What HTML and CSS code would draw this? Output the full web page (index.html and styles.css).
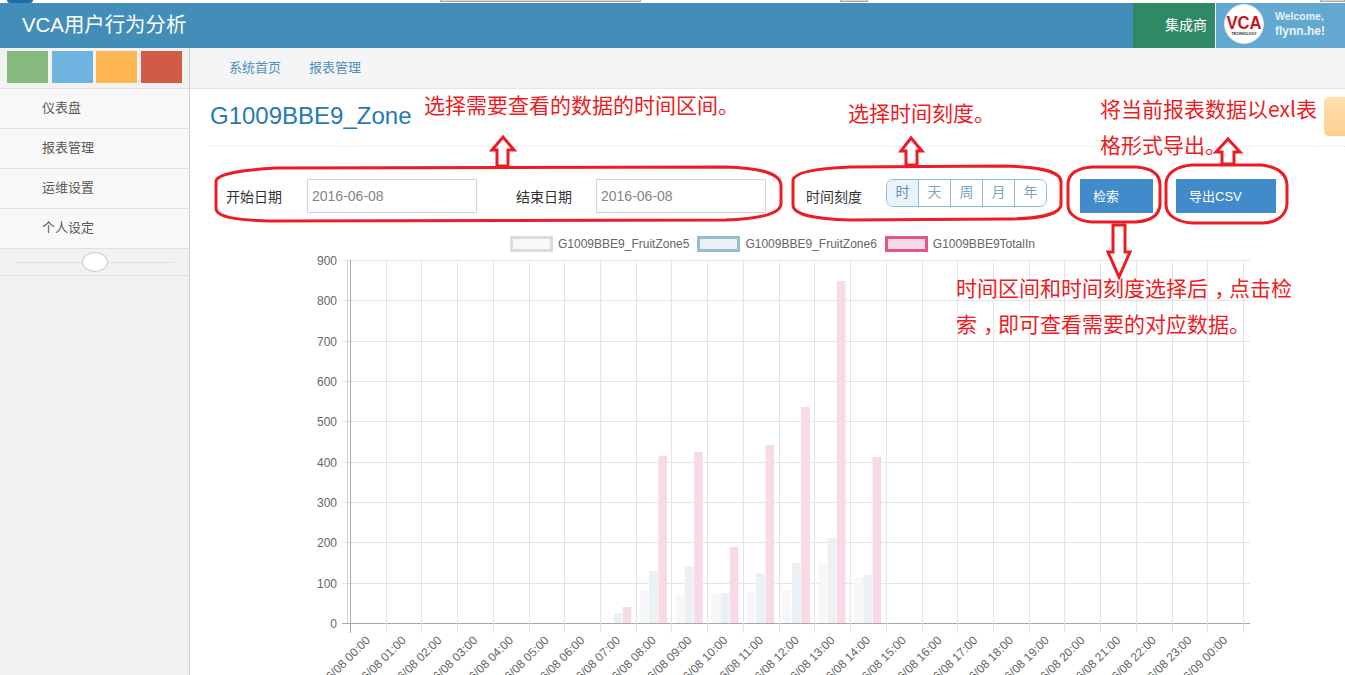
FILE: index.html
```html
<!DOCTYPE html>
<html lang="zh-CN">
<head>
    <meta charset="UTF-8">
    <title>VCA用户行为分析</title>
    <link rel="stylesheet" href="styles.css">
</head>
<body>
    <div class="topstrip">
        <span class="strip-logo"></span>
        <span class="strip-bar strip-bar-a"></span>
        <span class="strip-bar strip-bar-b"></span>
        <span class="strip-bar strip-bar-c"></span>
    </div>
    <header class="navbar">
        <div class="brand">VCA用户行为分析</div>
        <div class="role">集成商</div>
        <div class="user">
            <svg class="avatar" viewBox="0 0 40 40">
                <circle cx="20" cy="20" r="19.5" fill="#fff" stroke="#d9e6ef"/>
                <text x="20" y="25" text-anchor="middle" class="avatar-name" textLength="35" lengthAdjust="spacingAndGlyphs">VCA</text>
                <text x="20" y="31" text-anchor="middle" class="avatar-sub" textLength="25" lengthAdjust="spacingAndGlyphs">TECHNOLOGY</text>
            </svg>
            <div class="user-info">
                <span class="user-hello">Welcome,</span>
                <span class="user-name">flynn.he!</span>
            </div>
        </div>
    </header>
    <div class="main">
        <aside class="sidebar">
            <div class="shortcuts">
                <span class="shortcut s-green"></span>
                <span class="shortcut s-blue"></span>
                <span class="shortcut s-orange"></span>
                <span class="shortcut s-red"></span>
            </div>
            <div class="menu-item">仪表盘</div>
            <div class="menu-item">报表管理</div>
            <div class="menu-item">运维设置</div>
            <div class="menu-item">个人设定</div>
            <div class="collapse"><span class="collapse-knob"></span></div>
        </aside>
        <main class="content">
            <nav class="subnav">
                <a>系统首页</a>
                <a>报表管理</a>
            </nav>
            <div class="page-head"><h1>G1009BBE9_Zone</h1></div>
            <div class="toolbar">
                <label class="label-start">开始日期</label>
                <input class="date" type="text" placeholder="2016-06-08">
                <label class="label-end">结束日期</label>
                <input class="date" type="text" placeholder="2016-06-08">
                <label class="label-scale">时间刻度</label>
                <div class="scale">
                    <span class="active">时</span><span>天</span><span>周</span><span>月</span><span>年</span>
                </div>
                <button class="btn btn-search">检索</button>
                <button class="btn btn-export">导出CSV</button>
            </div>
            <div class="legend">
                <span class="swatch sw-grey"></span><span class="legend-text">G1009BBE9_FruitZone5</span>
                <span class="swatch sw-blue"></span><span class="legend-text">G1009BBE9_FruitZone6</span>
                <span class="swatch sw-pink"></span><span class="legend-text">G1009BBE9TotalIn</span>
            </div>
            <svg id="chart" class="chart" viewBox="300 255 1000 420"></svg>
        </main>
    </div>

    <div class="side-tab"></div>

    <!-- 标注 -->
    <svg class="marks" viewBox="0 0 1345 675">
        <path d="M216 181C218 173 245 170 275 168L725 167C760 168 781 173 781 186L781 204C780 215 755 219 725 220L270 221C240 220 216 218 216 208Z"/>
        <path d="M793 180C795 171 825 168 850 167L1005 166C1040 167 1061 171 1061 182L1061 205C1060 215 1035 219 1005 219L850 220C820 219 793 216 793 205Z"/>
        <path d="M1068 183C1069 172 1080 168 1092 167L1136 167C1150 168 1160 173 1160 185L1160 205C1159 216 1150 221 1136 222L1092 222C1078 221 1068 215 1068 205Z"/>
        <path d="M1166 183C1167 172 1178 166 1192 165L1262 165C1277 167 1287 173 1287 186L1287 204C1286 216 1276 223 1262 223L1192 223C1177 222 1166 215 1166 205Z"/>
        <path class="arrow" d="M497 166L497 150L492 150L503 137L514 150L508 150L508 166Z"/>
        <path class="arrow" d="M906 165L906 151L901 151L911 138L922 151L917 151L917 165Z"/>
        <path class="arrow" d="M1222 164L1222 152L1216 152L1228 139L1240 152L1234 152L1234 164Z"/>
        <path class="arrow" d="M1113 225L1125 225L1125 252L1130 252L1119 277L1108 252L1113 252Z"/>
    </svg>
    <p class="note note-range">选择需要查看的数据的时间区间。</p>
    <p class="note note-scale">选择时间刻度。</p>
    <p class="note note-export">将当前报表数据以exl表<br>格形式导出。</p>
    <p class="note note-search">时间区间和时间刻度选择后<span class="comma">，</span>点击检<br>索<span class="comma">，</span>即可查看需要的对应数据。</p>

    <script>
        const NS = 'http://www.w3.org/2000/svg';
        const chart = document.getElementById('chart');
        const left = 350, band = 35.72, zero = 623, top0 = 260;

        // 每小时三根柱子的顶部y，从页面上量出来的
        const rows = {
            7: [null, 613, 607],
            8: [591, 571, 456],
            9: [594, 566, 452],
            10: [594, 593, 547],
            11: [591, 573, 445],
            12: [591, 563, 407],
            13: [564, 538, 281],
            14: [578, 575, 457]
        };
        const colors = ['bar-grey', 'bar-blue', 'bar-pink'];

        function add(tag, attrs, text) {
            const el = document.createElementNS(NS, tag);
            for (const k in attrs) el.setAttribute(k, attrs[k]);
            if (text !== undefined) el.textContent = text;
            chart.appendChild(el);
            return el;
        }

        for (let i = 0; i <= 9; i++) {
            const y = Math.round(top0 + (zero - top0) * i / 9) + 0.5;
            add('line', { x1: 342, x2: 1250, y1: y, y2: y, class: i === 9 ? 'axis' : 'grid' });
            add('text', { x: 337, y: y + 4, class: 'ylabel' }, (900 - i * 100));
        }
        add('line', { x1: 347.5, x2: 347.5, y1: 260, y2: 623, class: 'grid-dark' });
        for (let i = 0; i <= 25; i++) {
            const x = Math.round(left + i * band) + 0.5;
            add('line', { x1: x, x2: x, y1: 260, y2: 633, class: i === 0 ? 'axis' : 'grid' });
        }
        for (const h in rows) {
            const x0 = left + h * band;
            rows[h].forEach(function (y, n) {
                if (y === null) return;
                add('rect', { x: x0 + 4 + n * 9.3, y: y, width: 8.6, height: 623 - y, class: colors[n] });
            });
        }
        for (let i = 0; i <= 24; i++) {
            const x = left + i * band + 21;
            const hour = String(i % 24).padStart(2, '0');
            const label = (i === 24 ? '06/09 ' : '06/08 ') + hour + ':00';
            add('text', { x: x, y: 641, class: 'xlabel', transform: 'rotate(-45 ' + x + ' 641)' }, label);
        }
    </script>
</body>
</html>
```

FILE: styles.css
```css
* {
    box-sizing: border-box;
}
html, body {
    margin: 0;
    height: 675px;
    overflow: hidden;
}
body {
    font-family: "Liberation Sans", "Noto Sans CJK SC", sans-serif;
    font-size: 13px;
    color: #393939;
    background-color: #fff;
    position: relative;
}

/* top sliver */
.topstrip {
    height: 3px;
    display: flex;
    overflow: hidden;
}
.strip-logo {
    width: 26px;
    height: 3px;
    margin-left: 7px;
    background-color: #1f6da8;
    border-radius: 0 0 8px 8px;
}
.strip-bar {
    height: 2px;
    background-color: #d6d6d6;
    border: 1px solid #a9a9a9;
    border-top: none;
}
.strip-bar-a {
    width: 201px;
    margin-left: 407px;
}
.strip-bar-b {
    width: 28px;
    margin-left: 199px;
}
.strip-bar-c {
    width: 25px;
    margin-left: 452px;
}

/* navbar */
.navbar {
    height: 45px;
    display: flex;
    background-color: #438eb9;
    color: #fff;
}
.brand {
    flex: 1;
    padding-left: 22px;
    font-size: 20.4px;
    line-height: 44px;
}
.role {
    width: 83px;
    padding-left: 32px;
    line-height: 44px;
    font-size: 14px;
    background-color: #2e8965;
    border-right: 1px solid #fff;
}
.user {
    width: 129px;
    display: flex;
    background-color: #62a8d1;
}
.avatar {
    width: 40px;
    height: 40px;
    margin: 1px 0 0 8px;
}
.avatar-name {
    font-family: "Liberation Sans", sans-serif;
    font-size: 18px;
    font-weight: bold;
    fill: #c8151d;
}
.avatar-sub {
    font-family: "Liberation Sans", sans-serif;
    font-size: 4px;
    font-weight: bold;
    fill: #222;
}
.user-info {
    display: flex;
    flex-direction: column;
    margin: 6px 0 0 11px;
    line-height: 15px;
    font-weight: bold;
    color: #e8f3fa;
}
.user-hello {
    font-size: 10.5px;
}
.user-name {
    font-size: 12px;
}

.main {
    display: flex;
    height: 627px;
}

/* sidebar */
.sidebar {
    width: 190px;
    background-color: #f2f2f2;
    border-right: 1px solid #ccc;
}
.shortcuts {
    height: 41px;
    display: flex;
    padding: 3px 0 0 7px;
    border-bottom: 1px solid #e0e0e0;
}
.shortcut {
    width: 41px;
    height: 32px;
    margin-right: 3.5px;
}
.s-green { background-color: #87b87f; }
.s-blue { background-color: #6fb3e0; }
.s-orange { background-color: #ffb752; }
.s-red { background-color: #d15b47; }
.menu-item {
    height: 40px;
    line-height: 38px;
    padding-left: 42px;
    color: #585858;
    background-color: #f8f8f8;
    border-bottom: 1px solid #e0e0e0;
}
.collapse {
    height: 27px;
    position: relative;
    border-bottom: 1px solid #e0e0e0;
}
.collapse::before {
    content: "";
    position: absolute;
    left: 15px;
    right: 15px;
    top: 13px;
    border-top: 1px solid #e0e0e0;
}
.collapse-knob {
    position: absolute;
    left: 82px;
    top: 3px;
    width: 26px;
    height: 20px;
    border-radius: 50%;
    background-color: #fff;
    border: 1px solid #c8c8c8;
}

/* content */
.content {
    flex: 1;
    min-width: 0;
}
.subnav {
    height: 41px;
    padding-left: 39px;
    display: flex;
    gap: 28px;
    line-height: 39px;
    background-color: #f5f5f5;
    border-bottom: 1px solid #e5e5e5;
}
.subnav a {
    color: #4c8fbd;
}
.page-head {
    height: 58px;
    margin-left: 20px;
    border-bottom: 1px dotted #e2e2e2;
}
.page-head h1 {
    margin: 0;
    padding-top: 13px;
    font-size: 24px;
    line-height: 28px;
    font-weight: normal;
    color: #2679b5;
}
.toolbar {
    display: flex;
    align-items: center;
    height: 34px;
    margin-top: 32px;
    padding-left: 36px;
}
.toolbar label {
    font-size: 14px;
    color: #333;
}
.label-start { width: 81px; }
.label-end { width: 80px; margin-left: 39px; }
.label-scale { width: 80px; margin-left: 40px; }
.date {
    width: 170px;
    height: 34px;
    padding: 0 4px;
    font-family: inherit;
    font-size: 14px;
    border: 1px solid #d5d5d5;
    outline: none;
}
.date::placeholder {
    color: #858585;
    opacity: 1;
}
.scale {
    display: flex;
    width: 161px;
    height: 28px;
    margin-top: -6px;
    border: 1px solid #8fbcd9;
    border-radius: 7px;
    overflow: hidden;
}
.scale span {
    flex: 1;
    text-align: center;
    line-height: 25px;
    font-size: 14px;
    color: #7aa5c4;
    border-left: 1px solid #8fbcd9;
}
.scale span:first-child {
    border-left: none;
}
.scale .active {
    background-color: #eaf3fa;
    color: #5f93b9;
}
.btn {
    height: 34px;
    padding: 0 0 2px 13px;
    text-align: left;
    font-family: inherit;
    font-size: 13px;
    color: #fff;
    background-color: #428bca;
    border: none;
}
.btn-search {
    width: 73px;
    margin-left: 33px;
}
.btn-export {
    width: 100px;
    margin-left: 23px;
}
.legend {
    display: flex;
    align-items: center;
    height: 16px;
    margin-top: 23px;
    padding-left: 320px;
    font-size: 12px;
    color: #666;
}
.swatch {
    width: 43px;
    height: 16px;
    border: 3px solid;
    margin-right: 5px;
}
.legend-text {
    margin-right: 8px;
}
.sw-grey { border-color: #dcdcdc; background-color: #f8f8f8; }
.sw-blue { border-color: #97bbcd; background-color: #eaf1f5; }
.sw-pink { border-color: #e0558b; background-color: #f9d9e6; }
.chart {
    display: block;
    width: 1000px;
    height: 420px;
    margin: 3px 0 0 110px;
}
.chart text {
    font-family: "Liberation Sans", sans-serif;
    font-size: 12px;
    fill: #666;
}
.grid {
    stroke: #e4e4e4;
    stroke-width: 1;
}
.grid-dark {
    stroke: #d0d0d0;
    stroke-width: 1;
}
.axis {
    stroke: #a8a8a8;
    stroke-width: 1;
}
.ylabel {
    text-anchor: end;
}
.xlabel {
    text-anchor: end;
}
.bar-grey { fill: #f7f7f7; }
.bar-blue { fill: #eaf0f3; }
.bar-pink { fill: #f8dae6; }

/* right edge tab */
.side-tab {
    position: absolute;
    right: 0;
    top: 97px;
    width: 21px;
    height: 39px;
    border-radius: 5px 0 0 5px;
    background: linear-gradient(#ffdfae, #ffcf91);
}

/* red annotations */
.marks {
    position: absolute;
    left: 0;
    top: 0;
    width: 1345px;
    height: 675px;
    pointer-events: none;
}
.marks path {
    fill: none;
    stroke: #ed1c24;
    stroke-width: 3;
}
.marks .arrow {
    fill: #fff;
}
.note {
    position: absolute;
    margin: 0;
    font-family: "Noto Sans CJK SC", sans-serif;
    font-size: 21px;
    line-height: 36px;
    color: #ed1c24;
    white-space: nowrap;
}
.note-range { left: 424px; top: 86px; }
.note-scale { left: 848px; top: 94px; }
.note-export { left: 1100px; top: 90px; }
.note-search { left: 956px; top: 269px; }
.comma {
    padding-left: 0.3em;
    letter-spacing: -0.3em;
}
```
